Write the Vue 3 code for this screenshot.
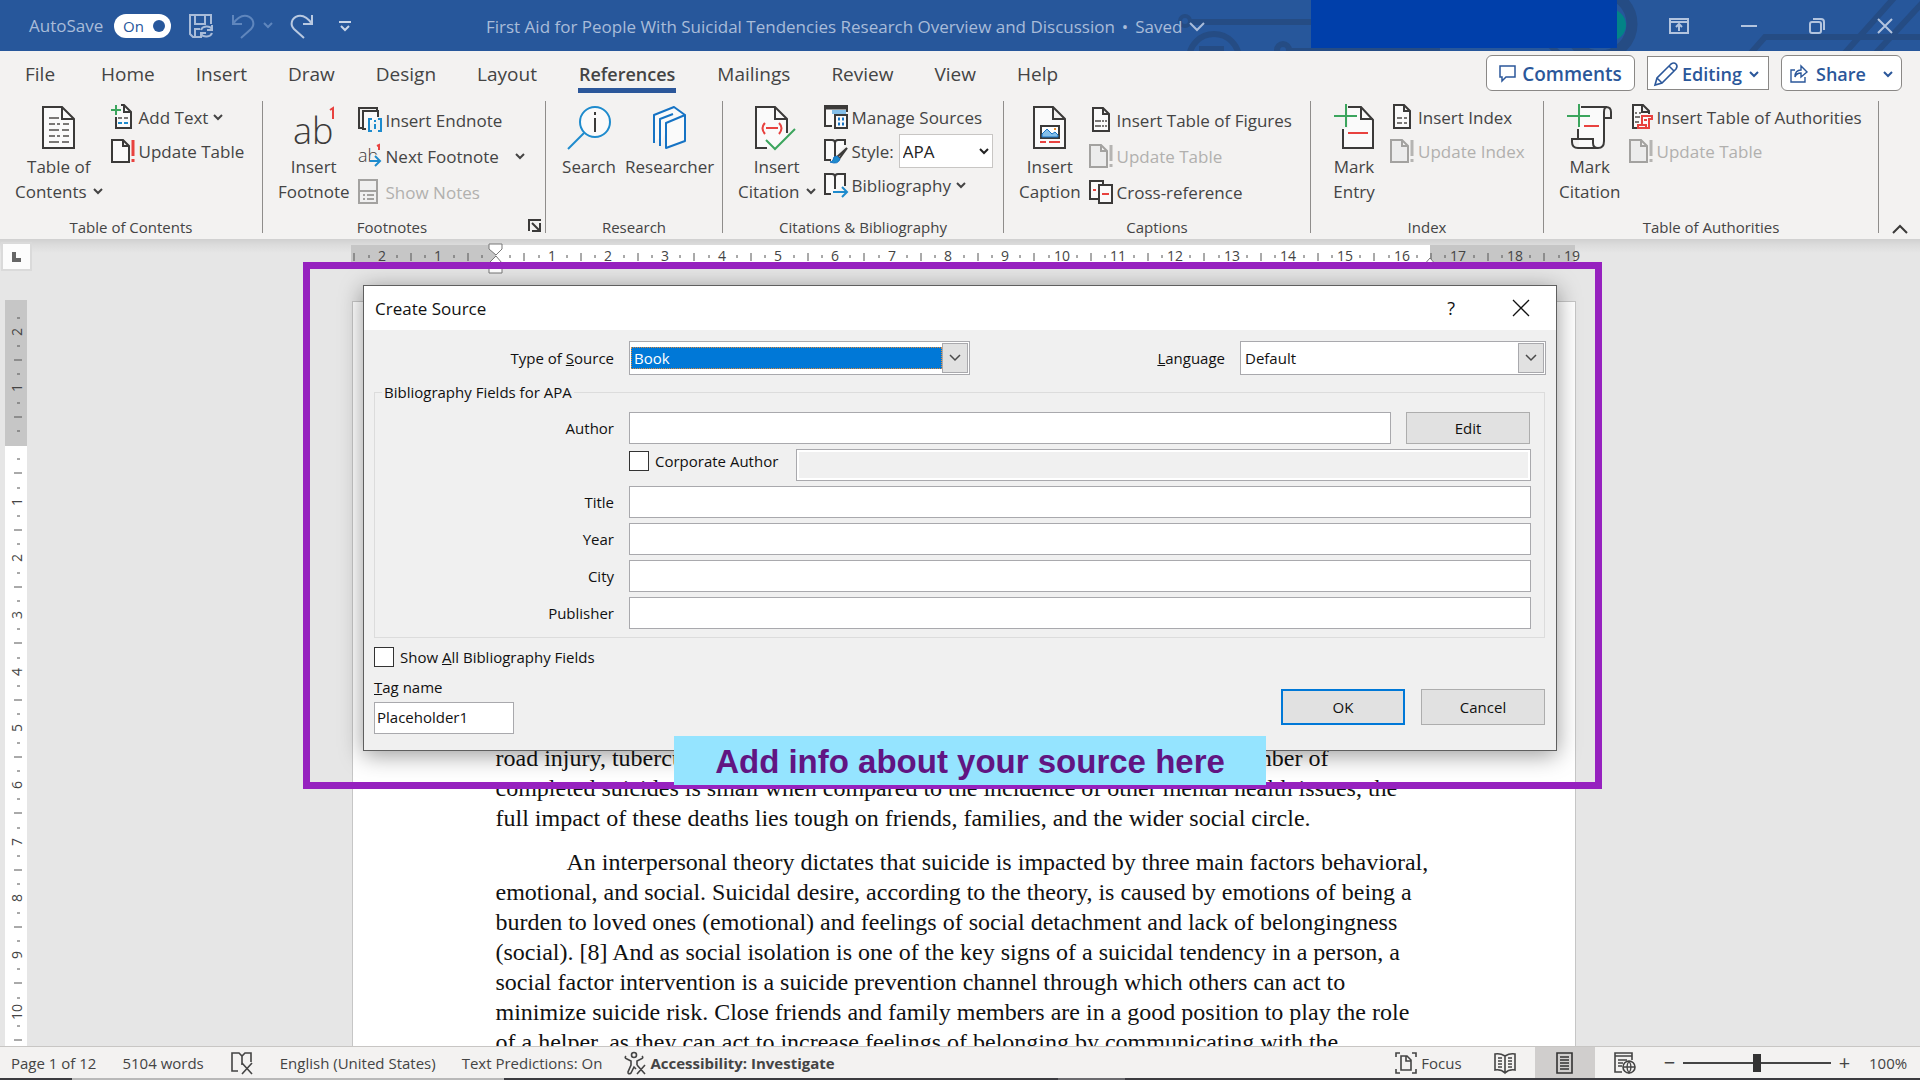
<script setup>
import { h, ref } from 'vue'

const K = '#3b3a39'
const G = '#7a7876'
const B = '#1e8bcd'
const R = '#e8423f'
const N = '#3ba55d'
const D = '#a3a2a0'

// Each icon: [width, height, markup]
const art = {
  autosave: [26, 26, `<g fill="none" stroke="#a9bcd9" stroke-width="2"><path d="M12 24H5l-3-3V2h21v9M7 2v9h10V2M7 24v-8h5"/><path d="M13 17a6 5 0 0 1 11-1M24 12v5h-5M24 20a6 5 0 0 1-11 1M13 25v-5h5"/></g>`],
  undo: [24, 26, `<path d="M2 2v9h9M2 11C6 5 11 2 16 3c7 2 8 9 4 13L10 25" fill="none" stroke="#5f86bd" stroke-width="2"/>`],
  redo: [24, 26, `<path d="M22 2v9h-9M22 11C18 5 13 2 8 3 1 5 0 12 4 16l10 9" fill="none" stroke="#b9c9e1" stroke-width="2"/>`],
  customize: [12, 12, `<path d="M0 2h12M2 6l4 4 4-4" fill="none" stroke="#c9d5e8" stroke-width="2"/>`],
  titleChevron: [16, 10, `<path d="M1 1l7 7 7-7" fill="none" stroke="#a9bcd9" stroke-width="2"/>`],
  ribbonMode: [20, 16, `<path d="M1 1h18v14H1zM1 4h18M10 13V7M7 9l3-3 3 3" fill="none" stroke="#b3c4de" stroke-width="2"/>`],
  minimize: [16, 16, `<path d="M0 8h16" stroke="#b3c4de" stroke-width="2"/>`],
  restore: [16, 16, `<g fill="none" stroke="#b3c4de" stroke-width="2"><rect x="1" y="4" width="11" height="11" rx="2"/><path d="M4 1h8a3 3 0 0 1 3 3v8"/></g>`],
  close: [16, 16, `<path d="M1 1l14 14M15 1L1 15" stroke="#b3c4de" stroke-width="2"/>`],
  comment: [18, 18, `<path d="M1 1h15v11H7l-4 4v-4H1z" fill="none" stroke="#2b579a" stroke-width="1.5"/>`],
  pencil: [26, 26, `<path d="M2 24l2-7L18 3q3-2 5 0t0 5L9 22zM16 5l5 5M4 17l5 5" fill="none" stroke="#2b579a" stroke-width="1.6"/>`],
  share: [18, 18, `<path d="M5 5H1v12h14v-5M5 12c0-5 3-7 6-7V1l6 6-6 5V8c-3 0-5 1-6 4z" fill="none" stroke="#2b579a" stroke-width="1.4"/>`],
  toc: [34, 44, `<path d="M1 1h19l12 12v29H1z" fill="#fafafa" stroke="${K}" stroke-width="2"/><path d="M20 1v12h12" fill="none" stroke="${K}" stroke-width="2"/><path d="M7 12h10M7 18h6m2 0h3m3 0h6M7 24h10m3 0h7M7 30h6m2 0h3m3 0h6M7 36h10m3 0h7" stroke="${G}" stroke-width="2"/>`],
  footnote: [44, 44, `<text x="1" y="38" font-family="Open Sans, sans-serif" font-weight="300" font-size="36" fill="${K}">ab</text><path d="M38 4l3-2v11" fill="none" stroke="${R}" stroke-width="2"/>`],
  search: [46, 44, `<circle cx="29" cy="16" r="15" fill="#fafafa" stroke="${B}" stroke-width="2"/><path d="M18 27L2 43" stroke="${B}" stroke-width="2"/><path d="M29 12v14M29 6v3" stroke="${K}" stroke-width="2"/>`],
  researcher: [36, 44, `<g fill="#fafafa" stroke="#1673c4" stroke-width="2" stroke-linejoin="round"><path d="M2 37V9L22 1l11 8"/><path d="M8 40V13L21 8"/><path d="M14 42V17L33 9v26z"/></g>`],
  citation: [44, 46, `<path d="M1 1h19l12 12v18L18 42H1z" fill="#fafafa"/><path d="M12 42H1V1h19l12 12v14M20 1v12h12" fill="none" stroke="${K}" stroke-width="2"/><path d="M10 17q-5 5 0 11M24 17q5 5 0 11M11 22h12" fill="none" stroke="${R}" stroke-width="2"/><path d="M11 34l9 9 20-20" fill="none" stroke="${N}" stroke-width="2"/>`],
  caption: [34, 44, `<path d="M1 1h19l12 12v29H1zM20 1v12h12" fill="#fafafa" stroke="${K}" stroke-width="2"/><path d="M8 20h18v12H8z" fill="#fff" stroke="${K}" stroke-width="2"/><path d="M9 31v-3l5-5 5 5 3-2 3 3v2z" fill="#83bfea" stroke="#1673c4"/><path d="M21 22h2v2h-2z" fill="#e98b2c"/><path d="M7 36h6m3 0h11" stroke="${R}" stroke-width="2"/>`],
  markEntry: [40, 46, `<g transform="translate(0 -2)"><path d="M9 24v20h30V16L27 3H14v21z" fill="#fafafa"/><path d="M9 25v19h30V16L27 3H14M27 3v12h12" fill="none" stroke="${K}" stroke-width="2"/><path d="M12 0v23M0 12h23" stroke="${N}" stroke-width="2"/><path d="M14 29h20" stroke="${R}" stroke-width="2"/></g>`],
  markCitation: [46, 46, `<g transform="translate(0 -2)"><path d="M14 3h24v35q0 6-7 6H12V24z" fill="#fafafa"/><path d="M14 3h25q5 0 5 5v6h-7V8q0-5 3-5M37 14v23q0 7-6 7H11q-6 0-6-6v-3h21v4q0 5 5 5M11 25v10" fill="none" stroke="${K}" stroke-width="2"/><path d="M12 0v23M0 12h23" stroke="${N}" stroke-width="2"/><path d="M17 22h15" stroke="${R}" stroke-width="2"/></g>`],
  addText: [24, 26, `<path d="M5 12v12h15V8l-6-6h-4z" fill="#fafafa"/><path d="M5 13v11h15V8l-7-7h-3M13 1v7h7" fill="none" stroke="${K}" stroke-width="2"/><path d="M5 1v10M0 6h10" stroke="${N}" stroke-width="2"/><path d="M7 14h4m2 0h4" stroke="${G}" stroke-width="2"/><path d="M7 19h4m2 0h4" stroke="${B}" stroke-width="2"/>`],
  update: [24, 26, `<path d="M1 2h11l6 6v16H1zM12 2v6h6" fill="#fafafa" stroke="${K}" stroke-width="2"/><path d="M22 2v16M22 21v3" stroke="${R}" stroke-width="3"/>`],
  updateOff: [24, 26, `<path d="M1 2h11l6 6v16H1zM12 2v6h6" fill="#ececec" stroke="${D}" stroke-width="2"/><path d="M22 2v16M22 21v3" stroke="#b5b4b2" stroke-width="3"/>`],
  endnote: [24, 26, `<path d="M6 21H1V1h18v3" fill="none" stroke="${K}" stroke-width="2"/><path d="M8 22H5V4h15v6" fill="#fafafa" stroke="${K}" stroke-width="2"/><path d="M14 12h-3v12h3M20 12h3v12h-3M17 17v5M17 13v2" fill="none" stroke="${B}" stroke-width="2"/>`],
  nextNote: [24, 26, `<text x="0" y="19" font-family="Open Sans, sans-serif" font-size="18" font-weight="300" fill="${K}">ab</text><path d="M19 3l2-1v5" fill="none" stroke="${R}" stroke-width="2"/><path d="M12 18h10M17 13l5 5-5 5" fill="none" stroke="#f3f2f1" stroke-width="5"/><path d="M12 18h10M17 13l5 5-5 5" fill="none" stroke="${B}" stroke-width="2"/>`],
  showNotes: [24, 26, `<path d="M1 1h18v23H1zM1 12h18" fill="#f0f0f0" stroke="${D}" stroke-width="2"/><path d="M5 16h2m2 0h7M5 20h2m2 0h7" stroke="${D}" stroke-width="2"/>`],
  sources: [24, 26, `<path d="M8 22H1V2h22v6" fill="#fafafa" stroke="${K}" stroke-width="2"/><path d="M1 4h22" stroke="${K}" stroke-width="3"/><path d="M8 6h14v4H8z" fill="#83bfea"/><path d="M11 11h12v13H11z" fill="#fafafa" stroke="${K}" stroke-width="2"/><path d="M14 15h2m2 0h2M14 20h2m2 0h2" stroke="#1673c4" stroke-width="3"/>`],
  style: [24, 26, `<path d="M7 22H1V2h7q3 0 3 3 0-3 3-3h7v5M11 4v15" fill="#fafafa" stroke="${K}" stroke-width="2"/><path d="M23 10L13 19l2 2z" fill="#fafafa" stroke="${K}" stroke-width="2"/><path d="M13 18q-4 0-4 4-1 2-3 2 8 3 10-3z" fill="#1e8bcd" stroke="#1673c4"/>`],
  biblio: [24, 26, `<path d="M7 22H1V2h7q3 0 3 3 0-3 3-3h7v12M11 4v13" fill="#fafafa" stroke="${K}" stroke-width="2"/><path d="M9 20h13M18 15l5 5-5 5" fill="none" stroke="${B}" stroke-width="2"/>`],
  figures: [24, 26, `<path d="M4 1h10l6 6v17H4zM14 1v6h6" fill="#fafafa" stroke="${K}" stroke-width="2"/><path d="M6 14h6m1 0h2m1 0h2M6 19h6m1 0h2m1 0h2" stroke="${G}" stroke-width="2"/>`],
  crossref: [24, 26, `<path d="M9 20H1V2h13v3" fill="#fafafa" stroke="${K}" stroke-width="2"/><path d="M10 6h13v18H10z" fill="#fafafa" stroke="${K}" stroke-width="2"/><path d="M4 11h3M13 15h7" stroke="${R}" stroke-width="2"/>`],
  indexDoc: [24, 26, `<path d="M4 1h10l6 6v17H4zM14 1v6h6" fill="#fafafa" stroke="${K}" stroke-width="2"/><path d="M7 14h5m2 0h3M7 19h5m2 0h3" stroke="${G}" stroke-width="2"/>`],
  authorities: [24, 26, `<path d="M8 24H4V1h10l6 6v3M13 1v7h7" fill="#fafafa" stroke="${K}" stroke-width="2"/><path d="M6 9h2m2 0h2M6 13h5M6 18h4" stroke="${G}" stroke-width="2"/><path d="M13 21V12h10v3h-3v9H9v-3h8v3M15 16h3" fill="#fafafa" stroke="${R}" stroke-width="2"/>`],
  chevron: [10, 7, `<path d="M1 1l4 4 4-4" fill="none" stroke="currentColor" stroke-width="2"/>`],
  comboChevron: [12, 8, `<path d="M1 1l5 5 5-5" fill="none" stroke="#4a4a4a" stroke-width="1.5"/>`],
  launcher: [14, 14, `<path d="M1 12V1h12M4 4l7 7M12 4v8H4" fill="none" stroke="${K}" stroke-width="2"/>`],
  collapse: [16, 10, `<path d="M1 9l7-7 7 7" fill="none" stroke="${K}" stroke-width="2"/>`],
  dialogClose: [16, 16, `<path d="M0 0l16 16M16 0L0 16" stroke="#111" stroke-width="1.3"/>`],
  proof: [24, 24, `<path d="M8 20H2V2h7l3 3 3-3h6v9M12 5v9" fill="none" stroke="#444" stroke-width="1.6"/><path d="M12 12l10 11M22 12L12 23" stroke="#444" stroke-width="1.6"/>`],
  access: [24, 24, `<g fill="none" stroke="#444" stroke-width="1.6"><circle cx="10" cy="4" r="2.5"/><path d="M2 5q-2 2 1 3l4 2v4l-3 7q0 3 3 1l3-6 2 2M18 5q2 2-1 3l-4 2v4M13 14l8 9M21 14l-8 9"/></g>`],
  focus: [24, 24, `<path d="M6 2H2v4M18 2h4v4M6 22H2v-4M18 22h4v-4M7 5h6l4 4v10H7zM12 5v5h5" fill="none" stroke="#444" stroke-width="1.6"/>`],
  read: [22, 22, `<path d="M11 4Q6 1 1 2v16q6-1 10 3 4-4 10-3V2q-5-1-10 2zv16M4 6h4M4 9h4M4 12h4M4 15h4M14 6h4M14 9h4M14 12h4M14 15h4" fill="none" stroke="#444" stroke-width="1.6"/>`],
  print: [18, 22, `<path d="M1 1h15v20H1zM4 5h9M4 8h9M4 11h9M4 14h9M4 17h9" fill="none" stroke="#333" stroke-width="1.6"/>`],
  web: [24, 22, `<path d="M9 20H2V1h17v7M2 4h17M5 8h9M5 11h5M5 14h4" fill="none" stroke="#444" stroke-width="1.6"/><circle cx="16" cy="15" r="6" fill="#f3f2f1" stroke="#444" stroke-width="1.6"/><path d="M10 15h12M16 9q-4 6 0 12 4-6 0-12" fill="none" stroke="#444" stroke-width="1.3"/>`],
}

const Icon = (props) => {
  const [w, ht, markup] = art[props.name]
  return h('svg', { width: w, height: ht, viewBox: `0 0 ${w} ${ht}`, 'aria-hidden': 'true', innerHTML: markup })
}
Icon.props = ['name']

const tabs = ['File', 'Home', 'Insert', 'Draw', 'Design', 'Layout', 'References', 'Mailings', 'Review', 'View', 'Help']

const groups = [
  { label: 'Table of Contents', big: [{ icon: 'toc', lines: ['Table of', 'Contents'], menu: true }],
    rows: [{ icon: 'addText', text: 'Add Text', menu: true }, { icon: 'update', text: 'Update Table' }] },
  { label: 'Footnotes', tall: true, launcher: true, big: [{ icon: 'footnote', lines: ['Insert', 'Footnote'] }],
    rows: [{ icon: 'endnote', text: 'Insert Endnote' }, { icon: 'nextNote', text: 'Next Footnote', menu: true, apart: true }, { icon: 'showNotes', text: 'Show Notes', off: true }] },
  { label: 'Research', big: [{ icon: 'search', lines: ['Search'] }, { icon: 'researcher', lines: ['Researcher'] }], rows: [] },
  { label: 'Citations & Bibliography', big: [{ icon: 'citation', lines: ['Insert', 'Citation'], menu: true }],
    rows: [{ icon: 'sources', text: 'Manage Sources' }, { icon: 'style', text: 'Style:', select: true }, { icon: 'biblio', text: 'Bibliography', menu: true }] },
  { label: 'Captions', tall: true, big: [{ icon: 'caption', lines: ['Insert', 'Caption'] }],
    rows: [{ icon: 'figures', text: 'Insert Table of Figures' }, { icon: 'updateOff', text: 'Update Table', off: true }, { icon: 'crossref', text: 'Cross-reference' }] },
  { label: 'Index', big: [{ icon: 'markEntry', lines: ['Mark', 'Entry'] }],
    rows: [{ icon: 'indexDoc', text: 'Insert Index' }, { icon: 'updateOff', text: 'Update Index', off: true }] },
  { label: 'Table of Authorities', big: [{ icon: 'markCitation', lines: ['Mark', 'Citation'] }],
    rows: [{ icon: 'authorities', text: 'Insert Table of Authorities' }, { icon: 'updateOff', text: 'Update Table', off: true }] },
]

// Ruler scale: one centimetre is 170/3 pixels, marked in quarters
const marks = (from, to, origin) => {
  const out = []
  for (let q = from * 4; q <= to * 4; q++) {
    if (q === 0) continue
    const kind = q % 4 === 0 ? 'num' : q % 2 === 0 ? 'half' : 'dot'
    out.push({ q, kind, n: Math.abs(q / 4), at: Math.round(origin + (q * 170) / 12) })
  }
  return out
}
const across = marks(-2.5, 19, 145)
const down = marks(-2.25, 10.5, 145)

const opening = ['completed suicides is small when compared to the incidence of other mental health issues, the',
  'full impact of these deaths lies tough on friends, families, and the wider social circle.']
const second = [
  'An interpersonal theory dictates that suicide is impacted by three main factors behavioral,',
  'emotional, and social. Suicidal desire, according to the theory, is caused by emotions of being a',
  'burden to loved ones (emotional) and feelings of social detachment and lack of belongingness',
  '(social). [8] And as social isolation is one of the key signs of a suicidal tendency in a person, a',
  'social factor intervention is a suicide prevention channel through which others can act to',
  'minimize suicide risk. Close friends and family members are in a good position to play the role',
  'of a helper, as they can act to increase feelings of belonging by communicating with the',
]

const fields = ['Title', 'Year', 'City', 'Publisher']
const values = ref({ Author: '', Corporate: '', Title: '', Year: '', City: '', Publisher: '' })
const tagName = ref('Placeholder1')
const corporate = ref(false)
const showAll = ref(false)
const autosave = ref(true)
const zoom = ref(50)
</script>

<template>
  <div class="app">
    <header class="titlebar">
      <svg class="circuit" width="760" height="51" viewBox="1160 0 760 51" fill="none" stroke="#254c84" stroke-width="6" aria-hidden="true">
        <circle cx="1185" cy="21" r="5" stroke-width="4" /><path d="M1191 22H1320" />
        <circle cx="1214" cy="59" r="25" /><path d="M1199 49h25" />
        <circle cx="1283" cy="50" r="6" /><path d="M1290 51h150M1545 40l14 14" />
        <circle cx="1600" cy="24" r="32" stroke-width="11" />
        <path d="M1750 54l15-17h155M1844 54l50-56M1875 54l50-54" />
        <circle cx="1610" cy="25" r="16" fill="#038387" stroke="none" />
      </svg>
      <label class="autosave">AutoSave
        <input v-model="autosave" type="checkbox" role="switch" />
        <span class="toggle">On<i></i></span>
      </label>
      <div class="quick">
        <button aria-label="Save"><Icon name="autosave" /></button>
        <button class="undo" aria-label="Undo"><Icon name="undo" /><Icon name="chevron" /></button>
        <button aria-label="Redo"><Icon name="redo" /></button>
        <button aria-label="Customize"><Icon name="customize" /></button>
      </div>
      <h1 class="doc-title"><span>First Aid for People With Suicidal Tendencies Research Overview and Discussion</span><span>•</span><span>Saved</span><Icon name="titleChevron" /></h1>
      <div class="account"></div>
      <div class="window">
        <button aria-label="Ribbon display"><Icon name="ribbonMode" /></button>
        <button aria-label="Minimize"><Icon name="minimize" /></button>
        <button aria-label="Restore"><Icon name="restore" /></button>
        <button aria-label="Close"><Icon name="close" /></button>
      </div>
    </header>

    <div class="tabbar">
      <nav class="tabs">
        <a v-for="t in tabs" :key="t" href="#" :class="{ active: t === 'References' }">{{ t }}</a>
      </nav>
      <div class="actions">
        <button class="pill comments"><Icon name="comment" />Comments</button>
        <button class="pill editing"><Icon name="pencil" />Editing<Icon name="chevron" /></button>
        <button class="pill share"><Icon name="share" />Share<Icon name="chevron" /></button>
      </div>
    </div>

    <div class="ribbon">
      <section v-for="g in groups" :key="g.label" class="group">
        <div class="group-body">
          <button v-for="b in g.big" :key="b.icon" class="big">
            <span class="big-icon"><Icon :name="b.icon" /></span>
            <span v-for="(l, i) in b.lines" :key="l" class="big-line">{{ l }}<Icon v-if="b.menu && i === 1" name="chevron" /></span>
          </button>
          <div v-if="g.rows.length" class="rows" :class="{ tall: g.tall }">
            <template v-for="r in g.rows" :key="r.text">
              <div v-if="r.select" class="cmd">
                <Icon :name="r.icon" /><label for="cite-style">{{ r.text }}</label>
                <span class="style-box"><select id="cite-style"><option>APA</option></select><Icon name="chevron" /></span>
              </div>
              <button v-else class="cmd" :class="{ apart: r.apart }" :disabled="r.off">
                <Icon :name="r.icon" /><span>{{ r.text }}</span><Icon v-if="r.menu" class="arrow" name="chevron" />
              </button>
            </template>
          </div>
        </div>
        <div class="group-label" :class="{ launches: g.launcher }">{{ g.label }}</div>
        <button v-if="g.launcher" class="launcher" aria-label="Footnote options"><Icon name="launcher" /></button>
      </section>
      <button class="collapse" aria-label="Collapse the ribbon"><Icon name="collapse" /></button>
    </div>

    <main class="workspace">
      <div class="side">
        <button class="tabstop" aria-label="Tab stop"><i></i></button>
        <svg class="vruler" width="22" height="746" viewBox="0 0 22 746">
          <rect width="22" height="746" fill="#fff" /><rect width="22" height="146" fill="#c6c6c6" />
          <template v-for="m in down" :key="m.q">
            <text v-if="m.kind === 'num'" :x="-m.at" y="17" transform="rotate(-90)" text-anchor="middle">{{ m.n }}</text>
            <path v-else :d="m.kind === 'half' ? `M9 ${m.at}h8` : `M12 ${m.at}h3`" />
          </template>
        </svg>
      </div>
      <div class="canvas">
        <svg class="hruler" width="1225" height="30" viewBox="0 0 1225 30">
          <rect y="2" width="1224" height="22" fill="#c6c6c6" /><rect x="145" y="2" width="934" height="22" fill="#fff" />
          <template v-for="m in across" :key="m.q">
            <text v-if="m.kind === 'num'" :x="m.at - 1" y="18" text-anchor="middle">{{ m.n }}</text>
            <path v-else :d="m.kind === 'half' ? `M${m.at} 10v8` : `M${m.at} 12v3`" />
          </template>
          <path class="marker" d="M138 1h13v5l-6 6-7-6zM145 13l6 7v10h-13V20zM1079 15l7 8h-14z" />
        </svg>
        <article class="page">
          <p>
            <span class="line broken"><span>road injury, tuberculosis</span><span>number of</span></span>
            <span v-for="l in opening" :key="l" class="line">{{ l }}</span>
          </p>
          <p class="indented"><span v-for="l in second" :key="l" class="line">{{ l }}</span></p>
        </article>
      </div>

      <form class="dialog" role="dialog" aria-label="Create Source" @submit.prevent>
        <div class="dialog-title">
          <h2>Create Source</h2>
          <button type="button" class="help">?</button>
          <button type="button" aria-label="Close dialog"><Icon name="dialogClose" /></button>
        </div>
        <div class="dialog-body">
          <div class="top-row">
            <label for="type" class="lead">Type of <u>S</u>ource</label>
            <div class="combo type"><select id="type"><option>Book</option></select><span class="drop"><Icon name="comboChevron" /></span></div>
            <label for="lang" class="push"><u>L</u>anguage</label>
            <div class="combo lang"><select id="lang"><option>Default</option></select><span class="drop"><Icon name="comboChevron" /></span></div>
          </div>
          <fieldset>
            <legend>Bibliography Fields for APA</legend>
            <div class="field">
              <label for="author" class="lead">Author</label>
              <input id="author" v-model="values.Author" type="text" />
              <button type="button" class="btn edit">Edit</button>
            </div>
            <div class="field">
              <span class="lead"></span>
              <label class="check corp"><input v-model="corporate" type="checkbox" />Corporate Author</label>
              <input v-model="values.Corporate" type="text" class="dim" aria-label="Corporate author name" disabled />
            </div>
            <div v-for="f in fields" :key="f" class="field">
              <label :for="f" class="lead">{{ f }}</label>
              <input :id="f" v-model="values[f]" type="text" />
            </div>
          </fieldset>
          <div class="footer">
            <div class="footer-left">
              <label class="check"><input v-model="showAll" type="checkbox" /><span>Show <u>A</u>ll Bibliography Fields</span></label>
              <label for="tag" class="tag-label"><u>T</u>ag name</label>
              <input id="tag" v-model="tagName" type="text" class="tag" />
            </div>
            <div class="buttons">
              <button class="btn ok">OK</button>
              <button type="button" class="btn">Cancel</button>
            </div>
          </div>
        </div>
      </form>
      <div class="highlight"></div>
      <div class="banner">Add info about your source here</div>
    </main>

    <footer class="status">
      <span>Page 1 of 12</span>
      <span>5104 words</span>
      <Icon name="proof" />
      <span>English (United States)</span>
      <span>Text Predictions: On</span>
      <span class="access"><Icon name="access" />Accessibility: Investigate</span>
      <div class="views">
        <button class="focus"><Icon name="focus" />Focus</button>
        <button aria-label="Read mode"><Icon name="read" /></button>
        <button class="current" aria-label="Print layout"><Icon name="print" /></button>
        <button aria-label="Web layout"><Icon name="web" /></button>
      </div>
      <div class="zoom">
        <button aria-label="Zoom out">−</button>
        <input v-model="zoom" type="range" aria-label="Zoom" />
        <button aria-label="Zoom in">+</button>
      </div>
      <span class="percent">100%</span>
    </footer>
    <div class="taskbar"><i class="a"></i><i class="b"></i></div>
  </div>
</template>

<style>
body { margin: 0; }
</style>

<style scoped>
* { box-sizing: border-box; }
.app { height: 100vh; display: flex; flex-direction: column; overflow: hidden; background: #e6e6e6; color: #444; font: 17px "Open Sans", "Noto Sans", sans-serif; }
.app :deep(svg) { flex: none; display: block; overflow: visible; }
button, input, select { font: inherit; color: inherit; margin: 0; }
button { border: 0; background: none; padding: 0; display: flex; align-items: center; justify-content: center; }
p, h1, h2 { margin: 0; font-weight: 400; }

.titlebar { position: relative; flex: none; height: 51px; display: flex; align-items: center; background: #27579b; color: #a9bcd9; overflow: hidden; }
.circuit { position: absolute; right: 0; top: 0; }
.autosave { display: flex; align-items: center; gap: 10px; margin-left: 29px; width: 142px; white-space: nowrap; height: 48px; justify-content: space-between; }
.autosave input { position: absolute; opacity: 0; }
.toggle { width: 57px; height: 24px; border-radius: 12px; background: #fff; color: #27579b; font-size: 15px; display: flex; align-items: center; justify-content: space-between; padding: 0 6px 0 9px; }
.toggle i { width: 12px; height: 12px; border-radius: 50%; background: #27579b; }
.quick { display: flex; align-items: center; margin-left: 17px; gap: 17px; width: 298px; }
.undo { gap: 8px; color: #5f86bd; }
.quick button:last-child { margin-left: 8px; }
.doc-title { position: relative; font-size: 17px; display: flex; align-items: center; gap: 7px; white-space: nowrap; padding-top: 2px; }
.account { position: relative; margin-left: auto; width: 306px; height: 48px; align-self: flex-start; background: #003faa; }
.window { position: relative; display: flex; gap: 52px; margin: 0 27px 0 52px; }

.tabbar { flex: none; display: flex; justify-content: space-between; height: 50px; background: #f3f2f1; }
.tabs { display: flex; gap: 41px; padding-left: 25px; }
.tabs a { min-width: 35px; height: 42px; padding-top: 10px; line-height: 27px; font-size: 19px; color: #444; text-decoration: none; border-bottom: 5px solid transparent; }
.tabs a.active { font-weight: 600; font-size: 18px; padding-left: 1px; padding-right: 1px; border-color: #2b579a; }
.actions { display: flex; gap: 12px; margin-right: 18px; padding-top: 4px; }
.pill { height: 36px; background: #fff; border: 1px solid #8a8886; border-radius: 6px; color: #2b579a; font-weight: 600; font-size: 18px; padding-top: 2px; }
.comments { width: 149px; gap: 5px; font-size: 19px; }
.editing { width: 122px; height: 34px; margin-top: 1px; border-radius: 0; gap: 3px; font-size: 18px; padding-right: 4px; }
.editing :deep(svg:last-child) { margin-left: 4px; }
.share { width: 121px; gap: 8px; }
.share :deep(svg:last-child) { margin-left: 9px; }

.ribbon { flex: none; display: grid; grid-template-columns: 263fr 283fr 177fr 281fr 307fr 233fr 335fr 41fr; height: 138px; background: #f3f2f1; }
.group { position: relative; height: 132px; border-right: 1px solid #8f8d8b; }
.group-body { display: flex; gap: 8px; height: 116px; padding-left: 15px; }
.big { flex-direction: column; justify-content: flex-start; min-width: 56px; padding-top: 5px; white-space: nowrap; }
.big-icon { height: 48px; }
.big-line { display: flex; align-items: center; gap: 6px; line-height: 25px; }
.rows .cmd { display: flex; justify-content: flex-start; align-items: center; height: 34px; gap: 4px; white-space: nowrap; }
.rows { margin-top: -1px; }
.rows.tall { padding-top: 2px; }
.rows.tall .cmd { height: 36px; }
.cmd:disabled { color: #b1b0ae; }
.arrow { margin-left: 1px; }
.apart .arrow { margin-left: 12px; }
.style-box { display: flex; align-items: center; width: 94px; height: 34px; background: #fff; border: 1px solid #c8c6c4; padding: 0 3px; color: #222; margin-left: 1px; }
.style-box select { appearance: none; flex: 1; min-width: 0; border: 0; background: none; padding: 0; outline: 0; }
.group-label { text-align: center; font-size: 15px; line-height: 20px; white-space: nowrap; }
.group-label.launches { padding-right: 24px; }
.launcher { position: absolute; right: 3px; bottom: 0; }
.collapse { align-self: end; margin-bottom: 5px; }

.workspace { position: relative; flex: 1; min-height: 0; display: flex; overflow: hidden; background: linear-gradient(#d0d0d0, #dcdcdc 6px, #e6e6e6 14px); }
.side { flex: none; width: 34px; padding-top: 3px; }
.tabstop { width: 31px; height: 29px; margin-left: 1px; border: 2px solid #dadada; background: #fcfcfc; }
.tabstop i { width: 9px; height: 10px; border: solid #666; border-width: 0 0 4px 4px; }
.vruler { margin: 29px 0 0 5px; }
svg text { font-size: 14px; fill: #444; }
.vruler path, .hruler path { stroke: #555; stroke-width: 1; fill: none; }
.hruler .marker { fill: #fff; stroke: #777; }
.canvas { flex: 1; display: flex; flex-direction: column; align-items: center; padding: 4px 27px 0 0; }
.page { flex: none; width: 1224px; margin-top: 28px; padding: 441px 0 0 143px; border: 1px solid #c6c6c6; background: #fff; font-family: "Liberation Serif", serif; font-size: 24px; line-height: 30px; color: #111; }
.page p { margin-bottom: 14px; }
.line { display: block; white-space: nowrap; }
.broken { display: flex; justify-content: space-between; width: 833px; }
.indented .line:first-child { padding-left: 71px; }

.dialog { position: absolute; top: 46px; left: calc(50% - 597px); width: 1194px; border: 1px solid #5f5f5f; background: #f0f0f0; color: #111; font-size: 15px; box-shadow: 0 4px 22px rgba(0, 0, 0, .4); }
.dialog-title { display: flex; align-items: center; height: 44px; background: #fff; padding: 0 27px 0 11px; }
.dialog-title h2 { font-size: 17px; margin-right: auto; }
.help { font-size: 18px; margin-right: 58px; }
.dialog-body { padding: 11px 10px 16px; }
.top-row, .field { display: flex; align-items: center; gap: 15px; }
.lead { flex: none; width: 240px; text-align: right; }
.push { margin-left: auto; }
.combo { display: flex; align-items: center; height: 34px; padding: 1px; background: #fff; border: 1px solid #a9a9ad; }
.combo select { appearance: none; flex: 1; min-width: 0; height: 22px; border: 0; border-radius: 0; padding: 0 3px; background: #fff; line-height: 20px; }
.combo.type { width: 341px; }
.combo.type select { background: #0078d7; color: #fff; border: 1px dotted #e08b3c; padding: 0 2px; }
.lang { width: 306px; }
.drop { width: 26px; height: 30px; border: 1px solid #a9a9ad; background: #e1e1e1; display: flex; align-items: center; justify-content: center; }
fieldset { min-width: 0; margin: 7px 1px 0 0; padding: 10px 13px 8px 0; border: 1px solid #dcdcdc; }
fieldset .lead { width: 239px; }
legend { margin-left: 7px; padding: 0 2px; line-height: 20px; }
.field { height: 32px; margin-bottom: 5px; }
.field:last-child { margin-bottom: 0; }
input[type="text"] { flex: 1; min-width: 0; height: 32px; border: 1px solid #a9a9ad; border-radius: 0; background: #fff; padding: 0 2px 3px; }
.field .dim { background: #f0f0f0; box-shadow: inset 0 0 0 2px #fff; }
.check { display: flex; align-items: center; gap: 6px; }
.check input { appearance: none; width: 20px; height: 20px; border: 1px solid #333; background: #fff; }
.corp { align-self: flex-start; margin-top: 2px; width: 152px; white-space: nowrap; }
.btn { width: 124px; height: 36px; border: 1px solid #adadad; background: #e1e1e1; }
.edit { height: 32px; margin-right: 1px; }
.ok { border: 2px solid #0078d7; }
.footer { display: flex; justify-content: space-between; align-items: flex-end; margin-top: 9px; }
.footer-left { display: flex; flex-direction: column; }
.tag-label { line-height: 20px; margin: 10px 0 5px; }
.footer .tag { flex: none; width: 140px; }
.buttons { display: flex; gap: 16px; margin: 0 1px 9px 0; }

.highlight { position: absolute; top: 23px; left: calc(50% - 657px); width: 1299px; height: 527px; border: 7px solid #9621bf; pointer-events: none; }
.banner { position: absolute; top: 497px; left: calc(50% - 286px); width: 592px; height: 49px; text-align: center; background: #95e4ff; color: #611582; font: 700 33px/52px "Liberation Sans", Arial, sans-serif; white-space: nowrap; }

.status { position: relative; flex: none; display: flex; align-items: center; height: 32px; padding-left: 11px; background: #f3f2f1; border-top: 1px solid #c8c6c4; font-size: 15px; gap: 26px; white-space: nowrap; }
.access { display: flex; align-items: center; gap: 2px; margin-left: -4px; font-weight: 700; }
.views { display: flex; align-self: stretch; margin-left: auto; }
.views button { width: 60px; }
.views .focus { width: 68px; gap: 3px; margin-right: 13px; }
.views .current { background: #d0cecd; }
.zoom { display: flex; align-items: center; gap: 7px; margin-left: -18px; }
.zoom button { width: 13px; font-size: 20px; line-height: 20px; }
.zoom input { appearance: none; width: 148px; height: 18px; background: linear-gradient(#444, #444) center / 100% 2px no-repeat; }
.zoom input::-webkit-slider-thumb { appearance: none; width: 8px; height: 18px; background: #333; }
.percent { width: 51px; margin-left: -8px; }
.taskbar { flex: none; display: flex; height: 2px; background: #3b3b40; }
.taskbar i { height: 2px; }
.a { margin-left: 72px; width: 432px; background: #b9b9b9; }
.b { margin-left: 554px; width: 67px; background: #6a6a6e; }
</style>
